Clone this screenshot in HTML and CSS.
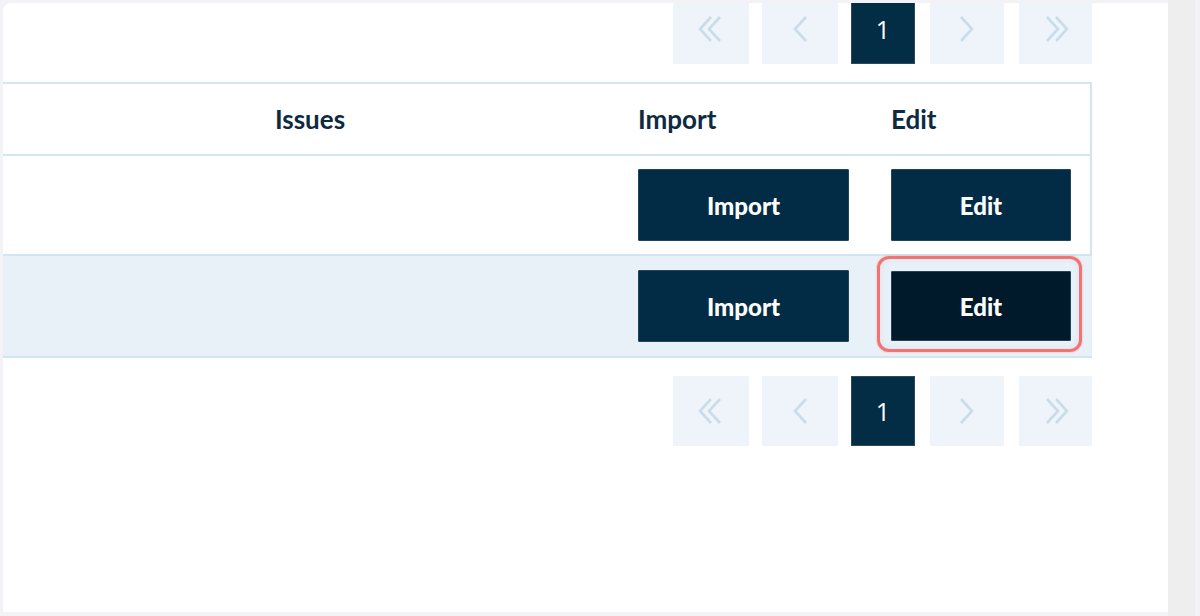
FILE: index.html
```html
<!DOCTYPE html>
<html lang="en">
<head>
<meta charset="utf-8">
<title>Issues</title>
<link rel="stylesheet" href="styles.css">
</head>
<body>
<div class="frame">
  <div class="panel">
    <div class="content">
      <nav class="pager pager-top">
        <span class="pg pg-first"><svg width="26" height="28" viewBox="0 0 26 28"><path d="M13 2 L2 14 L13 26 M22 2 L11 14 L22 26" /></svg></span>
        <span class="pg"><svg width="16" height="28" viewBox="0 0 16 28"><path d="M14 2 L3 14 L14 26" /></svg></span>
        <span class="pg pg-active">1</span>
        <span class="pg pg-next"><svg width="16" height="28" viewBox="0 0 16 28"><path d="M2 2 L13 14 L2 26" /></svg></span>
        <span class="pg pg-last"><svg width="26" height="28" viewBox="0 0 26 28"><path d="M4 2 L15 14 L4 26 M13 2 L24 14 L13 26" /></svg></span>
      </nav>

      <div class="grid">
        <div class="cell head c-issues">Issues</div>
        <div class="cell head">Import</div>
        <div class="cell head">Edit</div>

        <div class="cell"></div>
        <div class="cell"><button class="btn btn-import">Import</button></div>
        <div class="cell"><button class="btn btn-edit">Edit</button></div>

        <div class="cell alt"></div>
        <div class="cell alt"><button class="btn btn-import">Import</button></div>
        <div class="cell alt"><button class="btn btn-edit focused">Edit</button></div>
      </div>

      <nav class="pager pager-bottom">
        <span class="pg pg-first"><svg width="26" height="28" viewBox="0 0 26 28"><path d="M13 2 L2 14 L13 26 M22 2 L11 14 L22 26" /></svg></span>
        <span class="pg"><svg width="16" height="28" viewBox="0 0 16 28"><path d="M14 2 L3 14 L14 26" /></svg></span>
        <span class="pg pg-active">1</span>
        <span class="pg pg-next"><svg width="16" height="28" viewBox="0 0 16 28"><path d="M2 2 L13 14 L2 26" /></svg></span>
        <span class="pg pg-last"><svg width="26" height="28" viewBox="0 0 26 28"><path d="M4 2 L15 14 L4 26 M13 2 L24 14 L13 26" /></svg></span>
      </nav>
    </div>
  </div>
  <div class="side"></div>
</div>
</body>
</html>
```

FILE: styles.css
```css
html, body {
  margin: 0;
  padding: 0;
  height: 616px;
  overflow: hidden;
  background: #f3f2f6;
  font-family: "Lato", "Open Sans", sans-serif;
}

.frame {
  display: flex;
  height: 616px;
}

.panel {
  width: 1165px;
  margin: 3px 0 4px 3px;
  background: #ffffff;
  border-top-left-radius: 8px;
  overflow: hidden;
}

.side {
  width: 27px;
  margin-right: 5px;
  background: #eeeeee;
}

.content {
  margin-top: -9px;
  width: 1089px;
}

/* pagination */
.pager {
  display: flex;
  justify-content: flex-end;
  gap: 13px;
}

.pager-top {
  margin-bottom: 18px;
}

.pager-bottom {
  margin-top: 18px;
}

.pg {
  width: 76px;
  height: 70px;
  display: flex;
  align-items: center;
  justify-content: center;
  background: #eef4f9;
}

.pg svg path {
  fill: none;
  stroke: #c8dde9;
  stroke-width: 2.6;
  stroke-linecap: butt;
  stroke-linejoin: miter;
}

.pg-active {
  width: 64px;
  background: #032c45;
  color: #ffffff;
  font-family: "Open Sans", "Noto Sans", sans-serif;
  font-size: 25px;
  box-shadow: inset 0 0 0 1px #2a4a60;
}

.pg-next {
  width: 74px;
  margin-left: 2px;
}

.pg-last {
  width: 73px;
  margin-left: 2px;
}

/* table */
.grid {
  display: grid;
  grid-template-columns: 614px 253px 222px;
  border-top: 2px solid #d3e5ef;
  border-right: 2px solid #d3e5ef;
}

.cell {
  border-bottom: 2px solid #d3e5ef;
  padding: 0 21px;
  height: 98px;
  display: flex;
  align-items: center;
}

.cell.head {
  height: 70px;
  font-size: 26px;
  font-weight: 700;
  color: #0e2a3f;
}

.cell.c-issues {
  justify-content: center;
}

.cell.alt {
  height: 100px;
  background: #e9f1f8;
}

.btn {
  position: relative;
  height: 72px;
  border: 1px solid #23455c;
  border-radius: 1px;
  background: #022c45;
  color: #ffffff;
  font-family: "Lato", "Open Sans", sans-serif;
  font-size: 24px;
  font-weight: 900;
  padding: 0;
}

.btn-import {
  width: 211px;
}

.btn-edit {
  width: 180px;
}

.btn.focused {
  background: #011a2b;
  height: 70px;
}

.btn.focused::after {
  content: "";
  position: absolute;
  top: -16px;
  left: -15px;
  right: -12px;
  bottom: -12px;
  border: 3px solid #f37272;
  border-radius: 12px;
  box-shadow: 0 0 2px rgba(243, 114, 114, 0.6), inset 0 0 6px rgba(40, 60, 70, 0.08);
}
```
